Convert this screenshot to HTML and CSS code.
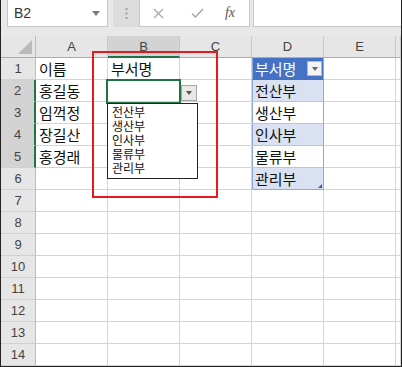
FILE: index.html
```
<!DOCTYPE html>
<html lang="ko">
<head>
    <meta charset="UTF-8">
    <title>부서명 목록</title>
    <link rel="stylesheet" href="styles.css">
</head>
<body>
    <div class="app">
        <div class="formula-bar">
            <div class="name-box">
                <span>B2</span>
                <svg width="8" height="5" viewBox="0 0 8 5"><path d="M0 0h8L4 5z" fill="#7a7a7a"/></svg>
            </div>
            <div class="grip">
                <svg width="3" height="11" viewBox="0 0 3 11"><rect x="0.5" y="0" width="2" height="2" fill="#a0a0a0"/><rect x="0.5" y="4.5" width="2" height="2" fill="#a0a0a0"/><rect x="0.5" y="9" width="2" height="2" fill="#a0a0a0"/></svg>
            </div>
            <div class="fx-buttons">
                <span class="slot slot-x"><svg width="11" height="11" viewBox="0 0 11 11"><path d="M1 1l9 9M10 1l-9 9" stroke="#a8a8a8" stroke-width="1.3" fill="none"/></svg></span>
                <span class="slot slot-ok"><svg width="13" height="10" viewBox="0 0 13 10"><path d="M1 5.5l3.5 3.5L12 1" stroke="#a8a8a8" stroke-width="1.5" fill="none"/></svg></span>
                <span class="slot slot-fx">fx</span>
            </div>
            <div class="formula-input"></div>
        </div>

        <div class="sheet">
            <div class="grid">
                <div class="corner"></div>
                <div class="col-head">A</div><div class="col-head active">B</div><div class="col-head">C</div><div class="col-head">D</div><div class="col-head">E</div><div class="col-head"></div>

                <div class="row-head">1</div><div class="cell">이름</div><div class="cell">부서명</div><div class="cell"></div><div class="cell tbl tbl-head">부서명<span class="filter-btn"></span></div><div class="cell"></div><div class="cell"></div>
                <div class="row-head active">2</div><div class="cell">홍길동</div><div class="cell"></div><div class="cell"></div><div class="cell tbl band">전산부</div><div class="cell"></div><div class="cell"></div>
                <div class="row-head active">3</div><div class="cell">임꺽정</div><div class="cell"></div><div class="cell"></div><div class="cell tbl">생산부</div><div class="cell"></div><div class="cell"></div>
                <div class="row-head active">4</div><div class="cell">장길산</div><div class="cell"></div><div class="cell"></div><div class="cell tbl band">인사부</div><div class="cell"></div><div class="cell"></div>
                <div class="row-head active">5</div><div class="cell">홍경래</div><div class="cell"></div><div class="cell"></div><div class="cell tbl">물류부</div><div class="cell"></div><div class="cell"></div>
                <div class="row-head">6</div><div class="cell"></div><div class="cell"></div><div class="cell"></div><div class="cell tbl band tbl-end">관리부</div><div class="cell"></div><div class="cell"></div>
                <div class="row-head">7</div><div class="cell"></div><div class="cell"></div><div class="cell"></div><div class="cell"></div><div class="cell"></div><div class="cell"></div>
                <div class="row-head">8</div><div class="cell"></div><div class="cell"></div><div class="cell"></div><div class="cell"></div><div class="cell"></div><div class="cell"></div>
                <div class="row-head">9</div><div class="cell"></div><div class="cell"></div><div class="cell"></div><div class="cell"></div><div class="cell"></div><div class="cell"></div>
                <div class="row-head">10</div><div class="cell"></div><div class="cell"></div><div class="cell"></div><div class="cell"></div><div class="cell"></div><div class="cell"></div>
                <div class="row-head">11</div><div class="cell"></div><div class="cell"></div><div class="cell"></div><div class="cell"></div><div class="cell"></div><div class="cell"></div>
                <div class="row-head">12</div><div class="cell"></div><div class="cell"></div><div class="cell"></div><div class="cell"></div><div class="cell"></div><div class="cell"></div>
                <div class="row-head">13</div><div class="cell"></div><div class="cell"></div><div class="cell"></div><div class="cell"></div><div class="cell"></div><div class="cell"></div>
                <div class="row-head">14</div><div class="cell"></div><div class="cell"></div><div class="cell"></div><div class="cell"></div><div class="cell"></div><div class="cell"></div>
            </div>

            <!-- overlays on the sheet -->
            <div class="highlight-box"></div>
            <div class="selection"></div>
            <div class="dd-arrow"></div>
            <ul class="dd-list">
                <li>전산부</li>
                <li>생산부</li>
                <li>인사부</li>
                <li>물류부</li>
                <li>관리부</li>
            </ul>
        </div>
    </div>
</body>
</html>
```

FILE: styles.css
```
:root {
    --excel-green: #217346;
    --grid-line: #d4d4d4;
    --head-bg: #e6e6e6;
    --head-active: #d3d3d3;
    --tbl-blue: #4472c4;
    --tbl-band: #d9e1f2;
    --tbl-line: #8ea9db;
}

* {
    margin: 0;
    padding: 0;
    box-sizing: border-box;
}

body {
    font-family: "Noto Sans CJK KR", "Noto Sans", sans-serif;
    background: #fff;
}

.app {
    width: 402px;
    height: 367px;
    border: 1px solid #222;
    border-top: none;
    background: #e8e8e8;
    display: flex;
    flex-direction: column;
    overflow: hidden;
}

/* formula bar */
.formula-bar {
    height: 36px;
    flex-shrink: 0;
    display: flex;
    align-items: flex-start;
    padding-left: 6px;
}

.name-box {
    width: 101px;
    height: 27px;
    background: #fff;
    border: 1px solid #c6c6c6;
    border-top: none;
    display: flex;
    align-items: center;
    justify-content: space-between;
    padding: 0 7px 0 6px;
    font-family: "Liberation Sans", Arial, sans-serif;
    font-size: 14px;
    color: #333;
}

.grip {
    width: 26px;
    height: 27px;
    margin-left: 5px;
    background: #dcdcdc;
    display: flex;
    align-items: center;
    justify-content: center;
}

.fx-buttons {
    width: 111px;
    height: 27px;
    background: #fff;
    border: 1px solid #c6c6c6;
    border-top: none;
    display: flex;
    align-items: center;
}

.slot {
    display: flex;
    align-items: center;
    justify-content: center;
}

.slot-x { width: 36px; }
.slot-ok { width: 42px; }
.slot-fx {
    width: 24px;
    font-family: "Liberation Serif", "Times New Roman", serif;
    font-style: italic;
    font-size: 14px;
    color: #555;
}

.formula-input {
    flex: 1;
    height: 27px;
    margin-left: 3px;
    background: #fff;
    border-left: 1px solid #c6c6c6;
    border-bottom: 1px solid #c6c6c6;
}

/* sheet */
.sheet {
    position: relative;
    flex: 1;
    background: #fff;
}

.grid {
    display: grid;
    grid-template-columns: 35px repeat(5, 72px) 1fr;
    grid-auto-rows: 22px;
}

.corner {
    background: var(--head-bg);
    border-right: 1px solid #bcbcbc;
    border-bottom: 1px solid #ababab;
    position: relative;
}

.corner::after {
    content: "";
    position: absolute;
    right: 3px;
    bottom: 3px;
    border-style: solid;
    border-width: 0 0 14px 14px;
    border-color: transparent transparent #b9b9b9 transparent;
}

.col-head {
    background: var(--head-bg);
    border-right: 1px solid #c8c8c8;
    border-bottom: 1px solid #ababab;
    font-family: "Liberation Sans", Arial, sans-serif;
    font-size: 13px;
    color: #444;
    display: flex;
    align-items: center;
    justify-content: center;
}

.col-head.active {
    background: var(--head-active);
    border-bottom: 2px solid var(--excel-green);
}

.row-head {
    background: var(--head-bg);
    border-right: 1px solid #bcbcbc;
    border-bottom: 1px solid #d0d0d0;
    font-family: "Liberation Sans", Arial, sans-serif;
    font-size: 13px;
    color: #444;
    display: flex;
    align-items: center;
    justify-content: center;
}

.row-head.active {
    background: var(--head-active);
    border-right: 2px solid var(--excel-green);
}

.cell {
    border-right: 1px solid var(--grid-line);
    border-bottom: 1px solid var(--grid-line);
    font-size: 15px;
    line-height: 21px;
    padding-left: 3px;
    color: #111;
    white-space: nowrap;
}

.tbl {
    border-right-color: var(--tbl-line);
    border-bottom-color: #b4c6e7;
    box-shadow: inset 1px 0 0 var(--tbl-line);
    position: relative;
}

.tbl.band {
    background: var(--tbl-band);
}

.tbl-head {
    background: var(--tbl-blue);
    color: #fff;
    border-bottom-color: var(--tbl-blue);
}

.tbl-end {
    border-bottom-color: var(--tbl-line);
}

.tbl-end::after {
    content: "";
    position: absolute;
    right: 1px;
    bottom: 1px;
    border-style: solid;
    border-width: 0 0 4px 4px;
    border-color: transparent transparent #3b5a98 transparent;
}

.filter-btn {
    position: absolute;
    right: 1px;
    top: 3px;
    width: 15px;
    height: 15px;
    background: #f4f4f4;
    border: 1px solid #b8b8b8;
}

.filter-btn::after {
    content: "";
    position: absolute;
    left: 4px;
    top: 5px;
    border-style: solid;
    border-width: 4px 3px 0 3px;
    border-color: #666 transparent transparent transparent;
}

/* overlays */
.highlight-box {
    position: absolute;
    left: 91px;
    top: 15px;
    width: 126px;
    height: 147px;
    border: 2px solid #e8191e;
}

.selection {
    position: absolute;
    left: 105px;
    top: 43px;
    width: 75px;
    height: 25px;
    border: 2px solid var(--excel-green);
}

.dd-arrow {
    position: absolute;
    left: 180px;
    top: 49px;
    width: 16px;
    height: 16px;
    background: #e8e8e8;
    border: 1px solid #a6a6a6;
}

.dd-arrow::after {
    content: "";
    position: absolute;
    left: 4px;
    top: 5px;
    border-style: solid;
    border-width: 4px 3.5px 0 3.5px;
    border-color: #555 transparent transparent transparent;
}

.dd-list {
    position: absolute;
    left: 106px;
    top: 67px;
    width: 91px;
    height: 76px;
    background: #fff;
    border: 1px solid #222;
    list-style: none;
    padding: 1px 0 0 4px;
}

.dd-list li {
    font-size: 12px;
    line-height: 14px;
    color: #111;
}
```
